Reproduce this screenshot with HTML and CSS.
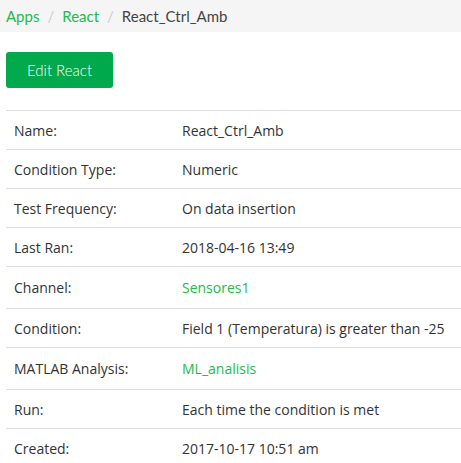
FILE: index.html
```html
<!DOCTYPE html>
<html>
<head>
<meta charset="utf-8">
<link rel="stylesheet" href="styles.css">
</head>
<body>
<nav class="crumbs">
  <a class="crumb-link" href="#">Apps</a>
  <span class="sep">/</span>
  <a class="crumb-link" href="#">React</a>
  <span class="sep">/</span>
  <span class="crumb-current">React_Ctrl_Amb</span>
</nav>
<div class="content">
  <a class="btn" href="#">Edit React</a>
  <div class="details">
    <div class="row"><div class="label">Name:</div><div class="value">React_Ctrl_Amb</div></div>
    <div class="row"><div class="label">Condition Type:</div><div class="value">Numeric</div></div>
    <div class="row"><div class="label">Test Frequency:</div><div class="value">On data insertion</div></div>
    <div class="row"><div class="label">Last Ran:</div><div class="value">2018-04-16 13:49</div></div>
    <div class="row tall"><div class="label">Channel:</div><div class="value"><a class="link" href="#">Sensores1</a></div></div>
    <div class="row"><div class="label">Condition:</div><div class="value">Field 1 (Temperatura) is greater than -25</div></div>
    <div class="row tall"><div class="label">MATLAB Analysis:</div><div class="value"><a class="link" href="#">ML_analisis</a></div></div>
    <div class="row"><div class="label">Run:</div><div class="value">Each time the condition is met</div></div>
    <div class="row"><div class="label">Created:</div><div class="value">2017-10-17 10:51 am</div></div>
  </div>
</div>
</body>
</html>
```

FILE: styles.css
```css
html, body {
  margin: 0;
  padding: 0;
  background: #fff;
}
body {
  font-family: "Open Sans", "Noto Sans", sans-serif;
  color: #333;
  overflow: hidden;
}
.crumbs {
  height: 32px;
  background: #f5f5f5;
  display: flex;
  align-items: center;
  padding: 0 6px;
  font-family: Lato, "Liberation Sans", sans-serif;
  font-size: 15px;
}
.crumb-link {
  color: #22bb4a;
  text-decoration: none;
}
.sep {
  color: #ccc;
  padding: 0 8px;
}
.crumb-current {
  color: #444;
}
.content {
  padding-left: 6px;
}
.btn {
  display: inline-flex;
  align-items: center;
  justify-content: center;
  margin-top: 20px;
  width: 107px;
  height: 36px;
  background: #00a94c;
  color: #fff;
  border-radius: 3px;
  text-decoration: none;
  font-family: Lato, "Liberation Sans", sans-serif;
  font-weight: 300;
  font-size: 15px;
}
.details {
  margin-top: 22px;
}
.row {
  display: grid;
  grid-template-columns: 168px 1fr;
  height: 39px;
  border-top: 1px solid #ddd;
  box-sizing: border-box;
  align-items: center;
  font-size: 14px;
}
.row.tall {
  height: 42px;
}
.label, .value {
  padding: 0 8px;
  white-space: nowrap;
}
.link {
  color: #22bb4a;
  text-decoration: none;
}
```
